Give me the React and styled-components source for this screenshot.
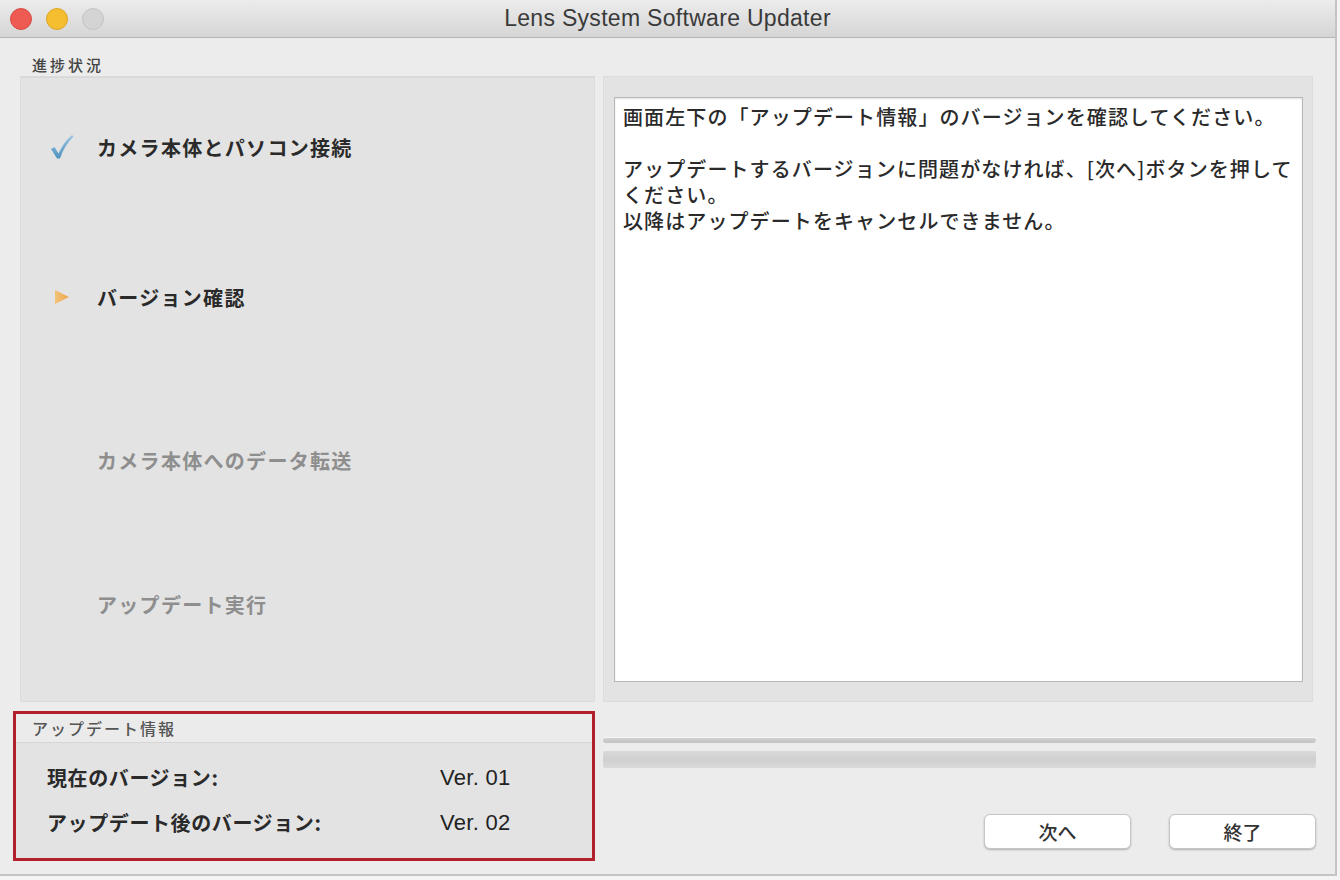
import React from "react";
import styled, { createGlobalStyle } from "styled-components";

const Global = createGlobalStyle`
  html, body { margin: 0; padding: 0; background: #f4f4f4; }
  body { font-family: "Noto Sans CJK JP", "Liberation Sans", sans-serif; }
  * { box-sizing: border-box; }
`;

const JP = `"Noto Sans CJK JP", "Noto Sans", sans-serif`;
const LATIN = `"Liberation Sans", "Noto Sans CJK JP", sans-serif`;

const Window = styled.div`
  width: 1337px;
  height: 876px;
  background: #ececec;
  border-right: 2px solid #c4c4c4;
  border-bottom: 2px solid #c4c4c4;
  display: flex;
  flex-direction: column;
  overflow: hidden;
`;

const TitleBar = styled.div`
  height: 38px;
  flex: none;
  display: grid;
  grid-template-columns: 200px 1fr 200px;
  align-items: center;
  background: linear-gradient(#ececec, #d5d5d5);
  border-bottom: 1px solid #b4b4b4;
`;

const Lights = styled.div`
  display: flex;
  gap: 14px;
  padding-left: 10px;
`;

const Light = styled.span`
  width: 22px;
  height: 22px;
  border-radius: 50%;
  background: ${(p) => p.$c};
  border: 1px solid ${(p) => p.$b};
`;

const Title = styled.div`
  text-align: center;
  font-family: ${LATIN};
  font-size: 23px;
  color: #3a3a3a;
  letter-spacing: 0.3px;
`;

const Content = styled.div`
  flex: 1;
  display: grid;
  grid-template-columns: 582px 713px;
  grid-template-rows: 38px 626px 1fr;
  column-gap: 8px;
  padding-left: 13px;
`;

const SectionLabel = styled.div`
  grid-column: 1 / 3;
  padding-left: 19px;
  display: flex;
  align-items: flex-end;
  padding-bottom: 1px;
  font-family: ${JP};
  font-size: 15px;
  font-weight: 500;
  color: #444;
  letter-spacing: 3px;
`;

const StepsPanel = styled.div`
  margin-left: 7px;
  background: #e3e3e3;
  border: 1px solid #dcdcdc;
  box-shadow: inset 0 1px 0 #d8d8d8;
  display: flex;
  flex-direction: column;
  padding-left: 29px;
`;

const Step = styled.div`
  display: flex;
  align-items: center;
  height: 30px;
  margin-top: ${(p) => p.$mt}px;
`;

const StepIcon = styled.div`
  width: 47px;
  display: flex;
  align-items: center;
  padding-left: ${(p) => p.$pl || 0}px;
`;

const StepText = styled.span`
  font-family: ${JP};
  font-size: 20px;
  font-weight: 700;
  letter-spacing: 1.3px;
  color: ${(p) => (p.$done ? "#2a2a2a" : "#8e8e8e")};
`;

const MessagePanel = styled.div`
  margin-right: 3px;
  background: #e3e3e3;
  border: 1px solid #dcdcdc;
  padding: 20px 9px 19px 10px;
  display: flex;
`;

const MessageBox = styled.div`
  flex: 1;
  background: #fff;
  border: 1px solid #b8b8b8;
  box-shadow: inset 0 1px 2px rgba(0, 0, 0, 0.12);
  padding: 6px 8px;
  font-family: ${JP};
  font-size: 20px;
  font-weight: 500;
  line-height: 26px;
  color: #2a2a2a;
  letter-spacing: 1.1px;
  white-space: nowrap;
`;

const Para = styled.p`
  margin: 0 0 ${(p) => p.$mb || 0}px;
`;

const InfoBox = styled.div`
  margin-top: 9px;
  height: 150px;
  border: 3px solid #b3202b;
  background: #e3e3e3;
  display: flex;
  flex-direction: column;
`;

const InfoHeader = styled.div`
  height: 29px;
  flex: none;
  background: #ebebeb;
  border-bottom: 1px solid #d6d6d6;
  padding-left: 16px;
  display: flex;
  align-items: center;
  font-family: ${JP};
  font-size: 16px;
  font-weight: 500;
  color: #555;
  letter-spacing: 2px;
`;

const InfoRows = styled.div`
  display: flex;
  flex-direction: column;
  padding: 20px 0 0 31px;
  gap: 17px;
`;

const InfoRow = styled.div`
  display: grid;
  grid-template-columns: 393px 1fr;
  align-items: center;
  height: 28px;
`;

const InfoKey = styled.span`
  font-family: ${JP};
  font-size: 20px;
  font-weight: 700;
  color: #2a2a2a;
  letter-spacing: 0.6px;
`;

const InfoVal = styled.span`
  font-family: ${LATIN};
  font-size: 22px;
  color: #222;
  letter-spacing: 0.3px;
`;

const BottomRight = styled.div`
  display: flex;
  flex-direction: column;
  padding-top: 35px;
`;

const ThinBar = styled.div`
  height: 6px;
  border-radius: 3px;
  background: linear-gradient(#d0d0d0, #c4c4c4);
  border-top: 1px solid #f6f6f6;
`;

const Bar = styled.div`
  margin-top: 8px;
  height: 17px;
  background: linear-gradient(#d9d9d9, #d0d0d0, #dadada);
  border-radius: 2px;
`;

const Buttons = styled.div`
  margin-top: 46px;
  display: flex;
  justify-content: flex-end;
  gap: 38px;
`;

const Button = styled.button`
  width: 147px;
  height: 35px;
  background: #fff;
  border: 1px solid #c6c6c6;
  border-radius: 6px;
  box-shadow: 0 1px 2px rgba(0, 0, 0, 0.25);
  font-family: ${JP};
  font-size: 19px;
  font-weight: 500;
  color: #333;
  padding: 0;
`;

const Check = () => (
  <svg width="24" height="26" viewBox="0 0 24 26">
    <defs>
      <linearGradient id="ck" x1="0" y1="0" x2="0" y2="1">
        <stop offset="0" stopColor="#9cc6e0" />
        <stop offset="1" stopColor="#4f93c0" />
      </linearGradient>
    </defs>
    <path
      d="M1 15 L4.5 13 L8.5 19.5 C12 12 16 6 22 1 L23.5 2.5 C17.5 8.5 13 15.5 10 24.5 L7 24.5 Z"
      fill="url(#ck)"
    />
  </svg>
);

const Arrow = () => (
  <svg width="16" height="16" viewBox="0 0 16 16">
    <defs>
      <linearGradient id="ar" x1="0" y1="0" x2="1" y2="0">
        <stop offset="0" stopColor="#f3c27a" />
        <stop offset="1" stopColor="#eea94a" />
      </linearGradient>
    </defs>
    <path d="M1 1 L15 8 L1 15 Z" fill="url(#ar)" />
  </svg>
);

export default function App() {
  return (
    <>
      <Global />
      <Window>
        <TitleBar>
          <Lights>
            <Light $c="#ee5b52" $b="#d84a42" />
            <Light $c="#f5be30" $b="#dea423" />
            <Light $c="#d4d4d4" $b="#c4c4c4" />
          </Lights>
          <Title>Lens System Software Updater</Title>
          <span />
        </TitleBar>
        <Content>
          <SectionLabel>進捗状況</SectionLabel>
          <StepsPanel>
            <Step $mt={55}>
              <StepIcon>
                <Check />
              </StepIcon>
              <StepText $done>カメラ本体とパソコン接続</StepText>
            </Step>
            <Step $mt={120}>
              <StepIcon $pl={4}>
                <Arrow />
              </StepIcon>
              <StepText $done>バージョン確認</StepText>
            </Step>
            <Step $mt={133}>
              <StepIcon />
              <StepText>カメラ本体へのデータ転送</StepText>
            </Step>
            <Step $mt={114}>
              <StepIcon />
              <StepText>アップデート実行</StepText>
            </Step>
          </StepsPanel>
          <MessagePanel>
            <MessageBox>
              <Para $mb={26}>画面左下の「アップデート情報」のバージョンを確認してください。</Para>
              <Para>
                アップデートするバージョンに問題がなければ、[次へ]ボタンを押して
                <br />
                ください。
                <br />
                以降はアップデートをキャンセルできません。
              </Para>
            </MessageBox>
          </MessagePanel>
          <InfoBox>
            <InfoHeader>アップデート情報</InfoHeader>
            <InfoRows>
              <InfoRow>
                <InfoKey>現在のバージョン:</InfoKey>
                <InfoVal>Ver. 01</InfoVal>
              </InfoRow>
              <InfoRow>
                <InfoKey>アップデート後のバージョン:</InfoKey>
                <InfoVal>Ver. 02</InfoVal>
              </InfoRow>
            </InfoRows>
          </InfoBox>
          <BottomRight>
            <ThinBar />
            <Bar />
            <Buttons>
              <Button>次へ</Button>
              <Button>終了</Button>
            </Buttons>
          </BottomRight>
        </Content>
      </Window>
    </>
  );
}
